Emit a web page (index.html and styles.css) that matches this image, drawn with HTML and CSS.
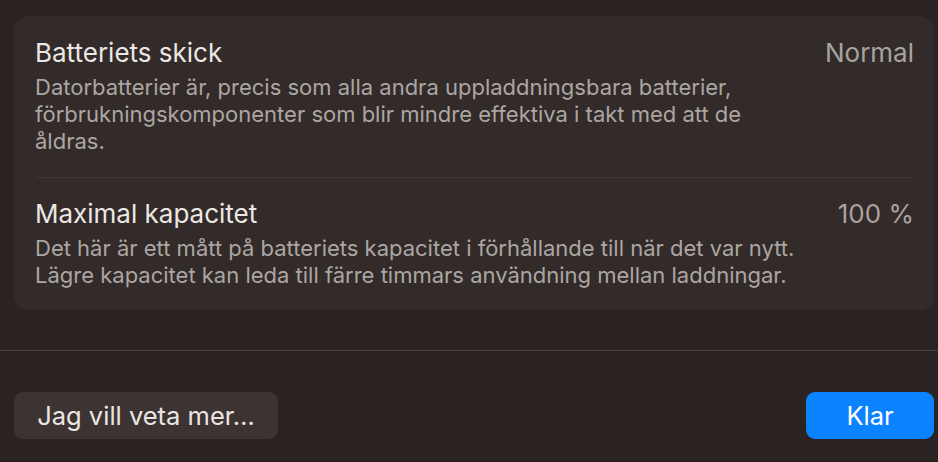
FILE: index.html
```html
<!DOCTYPE html>
<html lang="sv">

<head>
    <meta charset="UTF-8">
    <title>Batteriets skick</title>
    <link rel="stylesheet" href="styles.css">
</head>

<body>
    <div class="sheet">
        <section class="card">
            <div class="row">
                <div class="row-text">
                    <h2 class="row-title">Batteriets skick</h2>
                    <p class="row-desc">Datorbatterier är, precis som alla andra uppladdningsbara batterier,<br>förbrukningskomponenter som blir mindre effektiva i takt med att de<br>åldras.</p>
                </div>
                <span class="row-value">Normal</span>
            </div>
            <div class="row">
                <div class="row-text">
                    <h2 class="row-title">Maximal kapacitet</h2>
                    <p class="row-desc">Det här är ett mått på batteriets kapacitet i förhållande till när det var nytt.<br>Lägre kapacitet kan leda till färre timmars användning mellan laddningar.</p>
                </div>
                <span class="row-value">100 %</span>
            </div>
        </section>
    </div>
    <div class="actions">
        <button class="btn btn-more">Jag vill veta mer…</button>
        <button class="btn btn-done">Klar</button>
    </div>
</body>
</html>
```

FILE: styles.css
```css
* {
    padding: 0;
    margin: 0;
    box-sizing: border-box;
}

body {
    width: 938px;
    height: 462px;
    overflow: hidden;
    background: #2a2321;
    font-family: Inter, "Noto Sans", "Liberation Sans", sans-serif;
    color: #ebe6e3;
}

.sheet {
    padding: 16px 4px 0 14px;
}

.card {
    background: #322b29;
    border-radius: 14px;
    padding: 0 20px 0 21px;
}

.row {
    display: flex;
    justify-content: space-between;
    align-items: flex-start;
    padding: 21px 0 22px;
}

.row + .row {
    border-top: 1px solid #3f3836;
    padding: 20px 0 21px;
}

.row-title {
    font-size: 26px;
    line-height: 32px;
    font-weight: 400;
    color: #ece7e4;
    margin-bottom: 5px;
}

.row-desc {
    font-size: 22px;
    line-height: 27px;
    color: #aca6a3;
}

.row-value {
    font-size: 26px;
    line-height: 32px;
    color: #a9a3a0;
    white-space: nowrap;
}

.actions {
    margin-top: 40px;
    border-top: 1px solid #4a4341;
    padding: 41px 4px 0 14px;
    display: flex;
    justify-content: space-between;
}

.btn {
    height: 47px;
    border: 0;
    border-radius: 9px;
    font-family: inherit;
    font-size: 25.5px;
    cursor: pointer;
}

.btn-more {
    width: 264px;
    background: #3b3432;
    color: #ebe6e3;
}

.btn-done {
    width: 128px;
    background: #0b83fe;
    color: #fff;
}
```
